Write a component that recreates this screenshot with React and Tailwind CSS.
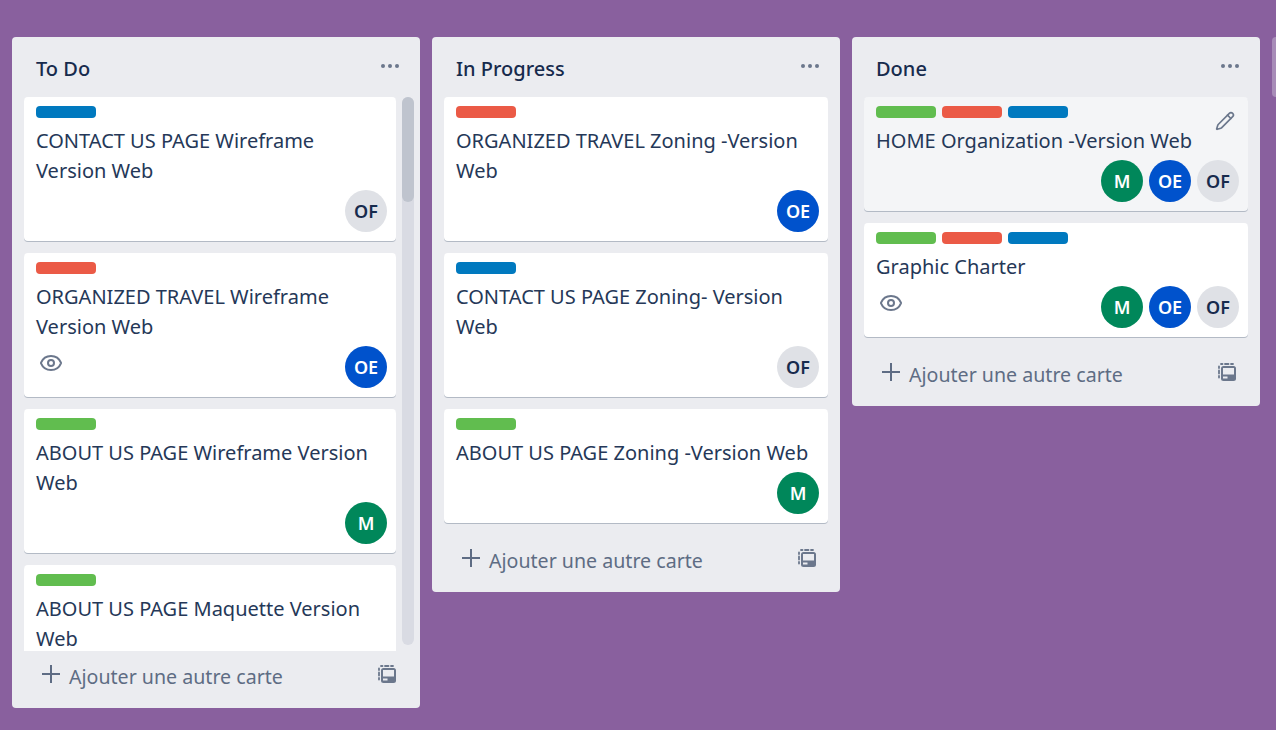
import { Pencil, Eye } from "lucide-react"

const BLUE = "bg-[#0079bf]"
const RED = "bg-[#eb5a46]"
const GREEN = "bg-[#61bd4f]"

const avatars = {
  M: "bg-[#00875a] text-white",
  OE: "bg-[#0052cc] text-white",
  OF: "bg-[#dfe1e6] text-[#172b4d]",
}

function Avatar({ name }) {
  return (
    <div className={`w-[42px] h-[42px] pt-px rounded-full flex items-center justify-center text-[18px] font-semibold ${avatars[name]}`}>
      {name}
    </div>
  )
}

function TemplateIcon() {
  return (
    <svg width="18" height="18" viewBox="0 0 18 18" fill="none" className="text-[#6b778c] -mt-1.5">
      <path d="M3 1h1.5M7 1h3.5M13 1h2M1 3.5v1.5M1 7.5v3M1 13v1.5" stroke="currentColor" strokeWidth="1.8" strokeLinecap="round" />
      <rect x="3" y="3" width="15" height="15" rx="2.5" fill="currentColor" />
      <rect x="5" y="5" width="11" height="6.5" fill="#ebecf0" />
      <rect x="5" y="13.5" width="4.5" height="2" fill="#ebecf0" />
    </svg>
  )
}

function Card({ labels = [], title, members = [], watched, hovered }) {
  return (
    <div className={`relative shrink-0 rounded-[4px] px-3 pt-[9px] pb-[9px] mb-3 shadow-[0_1px_0_#b3bac5] ${hovered ? "bg-[#f4f5f7]" : "bg-white"}`}>
      <div className="flex gap-1.5 h-3 mb-2">
        {labels.map((c, i) => (
          <span key={i} className={`w-[60px] h-3 rounded-[4px] ${c}`} />
        ))}
      </div>
      <div className="text-[20px] leading-[30px] text-[#253858]">{title}</div>
      {hovered && <Pencil className="absolute top-[14px] right-[13px] text-[#6b778c]" size={20} strokeWidth={2} />}
      <div className="flex items-start justify-between mt-1">
        <div className="h-[42px] pt-[5px] pl-[3px] text-[#6b778c]">{watched && <Eye size={24} strokeWidth={2} />}</div>
        <div className="flex gap-1.5 -mr-[3px]">
          {members.map((m) => (
            <Avatar key={m} name={m} />
          ))}
        </div>
      </div>
    </div>
  )
}

function List({ title, scroll, heightClass, children }) {
  return (
    <div className={`w-[408px] shrink-0 bg-[#ebecf0] rounded-[4px] flex flex-col ${heightClass}`}>
      <div className="flex items-center justify-between h-[60px] pt-1 pl-6 pr-[21px] shrink-0">
        <span className="text-[20px] font-medium text-[#172b4d]">{title}</span>
        <svg width="18" height="4" viewBox="0 0 18 4" className="text-[#6b778c] -mt-[6px]" fill="currentColor">
          <circle cx="2" cy="2" r="2" />
          <circle cx="9" cy="2" r="2" />
          <circle cx="16" cy="2" r="2" />
        </svg>
      </div>
      <div className="relative flex-1 min-h-0 overflow-hidden">
        <div className={`h-full overflow-hidden pl-3 ${scroll ? "pr-6" : "pr-3"}`}>{children}</div>
        {scroll && (
          <div className="absolute top-0 right-[6px] bottom-[6px] w-3 rounded-[6px] bg-[#d9dbe3]">
            <div className="w-3 h-[105px] rounded-[6px] bg-[#bfc4ce]" />
          </div>
        )}
      </div>
      <div className="flex items-center justify-between h-[57px] pb-[5px] pl-[30px] pr-6 shrink-0 text-[#5e6c84]">
        <div className="flex items-center gap-[9px]">
          <svg width="18" height="18" viewBox="0 0 18 18" className="-mt-1.5" stroke="currentColor" strokeWidth="2" fill="none">
            <path d="M9 0v18M0 9h18" />
          </svg>
          <span className="text-[19.6px]">Ajouter une autre carte</span>
        </div>
        <TemplateIcon />
      </div>
    </div>
  )
}

export default function App() {
  return (
    <div className="w-[1276px] h-[730px] overflow-hidden bg-[#89609e] flex items-start gap-3 pl-3 pt-[37px] font-['Noto_Sans',sans-serif]">
      <List title="To Do" scroll heightClass="h-[671px]">
        <Card labels={[BLUE]} title="CONTACT US PAGE Wireframe Version Web" members={["OF"]} />
        <Card labels={[RED]} title="ORGANIZED TRAVEL Wireframe Version Web" members={["OE"]} watched />
        <Card labels={[GREEN]} title="ABOUT US PAGE Wireframe Version Web" members={["M"]} />
        <Card labels={[GREEN]} title="ABOUT US PAGE Maquette Version Web" />
      </List>
      <List title="In Progress">
        <Card labels={[RED]} title="ORGANIZED TRAVEL Zoning -Version Web" members={["OE"]} />
        <Card labels={[BLUE]} title="CONTACT US PAGE Zoning- Version Web" members={["OF"]} />
        <Card labels={[GREEN]} title="ABOUT US PAGE Zoning -Version Web" members={["M"]} />
      </List>
      <List title="Done">
        <Card labels={[GREEN, RED, BLUE]} title="HOME Organization -Version Web" members={["M", "OE", "OF"]} hovered />
        <Card labels={[GREEN, RED, BLUE]} title="Graphic Charter" members={["M", "OE", "OF"]} watched />
      </List>
      <div className="w-[408px] h-[60px] shrink-0 rounded-[4px] bg-[#a88cb8]" />
    </div>
  )
}
